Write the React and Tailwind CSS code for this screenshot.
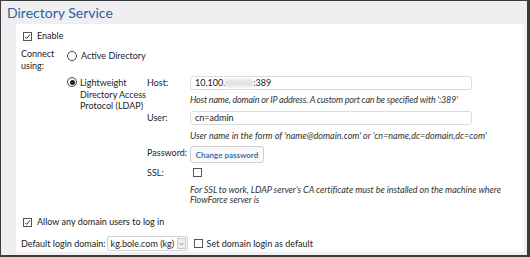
import { ChevronDown } from 'lucide-react';

const font = { fontFamily: 'Lato, "Noto Sans", sans-serif' };

function Check({ checked }) {
  return (
    <span className="w-[9px] h-[9px] border border-[#555] bg-white flex items-center justify-center shrink-0">
      {checked && (
        <svg width="7" height="7" viewBox="0 0 7 7">
          <path d="M1 3.6 L2.8 5.4 L6 1.4" fill="none" stroke="#333" strokeWidth="1" />
        </svg>
      )}
    </span>
  );
}

function Radio({ checked }) {
  return (
    <span className="w-[10px] h-[10px] rounded-full border border-[#444] bg-white flex items-center justify-center shrink-0">
      {checked && <span className="w-[5px] h-[5px] rounded-full bg-[#222]" />}
    </span>
  );
}

export default function App() {
  return (
    <div
      className="w-[530px] h-[257px] bg-[#efeff1] border-t border-l border-[#3c3c3c] border-r-[3px] border-b-2 overflow-hidden flex flex-col text-[9px] text-[#222] whitespace-nowrap"
      style={font}
    >
      <header className="h-[23px] pl-[6px] flex items-center">
        <h1 className="text-[14px] text-[#2d5f9c] leading-none pt-[1px]">Directory Service</h1>
      </header>

      <main className="flex-1 ml-[15px] mr-[3px] mb-[3px] bg-white pl-[5px] pt-[7px] flex flex-col">
        <label className="flex items-center gap-[5px] pl-[2px] h-[10px]">
          <Check checked />
          <span>Enable</span>
        </label>

        <div className="flex mt-[7px]">
          <div className="w-[46px] leading-[12px]">
            Connect
            <br />
            using:
          </div>
          <div className="flex flex-col">
            <label className="flex items-center gap-[4px] h-[12px] mt-[2px]">
              <Radio />
              <span>Active Directory</span>
            </label>

            <div className="flex mt-[14px]">
              <div className="w-[80px] flex gap-[3px]">
                <div className="pt-[1px]">
                  <Radio checked />
                </div>
                <div className="leading-[11.5px] pt-[1px]">
                  Lightweight
                  <br />
                  Directory Access
                  <br />
                  Protocol (LDAP)
                </div>
              </div>

              <div className="grid grid-cols-[43px_282px] grid-rows-[14px_20px_15px_21px_17px_19px_auto] items-center">
                <div>Host:</div>
                <div className="h-[14px] border border-[#dcdcdc] rounded-[3px] px-[4px] flex items-center">
                  <span>10.100.</span>
                  <span className="w-[28px] h-[8px] bg-[#e4e4e4] blur-[1.5px]" />
                  <span>:389</span>
                </div>

                <div />
                <div className="italic text-[#333] tracking-[-0.2px]">
                  Host name, domain or IP address. A custom port can be specified with ':389'
                </div>

                <div>User:</div>
                <div className="h-[14px] border border-[#dcdcdc] rounded-[3px] px-[4px] flex items-center">
                  cn=admin
                </div>

                <div />
                <div className="italic text-[#333]">
                  User name in the form of 'name@domain.com' or 'cn=name,dc=domain,dc=com'
                </div>

                <div className="-mt-[3px]">Password:</div>
                <div>
                  <button className="h-[17px] w-[74px] border border-[#d0d0d0] rounded-[3px] bg-[#fafafa] text-[#2c63a6] text-[8px] font-semibold leading-none">
                    Change password
                  </button>
                </div>

                <div>SSL:</div>
                <div className="pl-[3px]">
                  <Check />
                </div>

                <div />
                <div className="italic leading-[9.5px] text-[#333] pt-[3px] tracking-[-0.05px]">
                  For SSL to work, LDAP server's CA certificate must be installed on the machine where
                  <br />
                  FlowForce server is
                </div>
              </div>
            </div>
          </div>
        </div>

        <label className="flex items-center gap-[5px] pl-[2px] h-[10px] mt-[13px]">
          <Check checked />
          <span>Allow any domain users to log in</span>
        </label>

        <div className="flex items-center mt-[9px]">
          <span>Default login domain:</span>
          <div className="ml-[1px] h-[15px] w-[81px] border border-[#cfcfcf] rounded-[2px] flex items-center pl-[3px] justify-between">
            <span>kg.bole.com (kg)</span>
            <span className="w-[9px] h-[11px] mr-[1px] border border-[#c8c8c8] bg-[#eee] flex items-center justify-center">
              <ChevronDown size={8} strokeWidth={2} color="#555" />
            </span>
          </div>
          <label className="flex items-center gap-[4px] ml-[6px]">
            <Check />
            <span>Set domain login as default</span>
          </label>
        </div>
      </main>
    </div>
  );
}
